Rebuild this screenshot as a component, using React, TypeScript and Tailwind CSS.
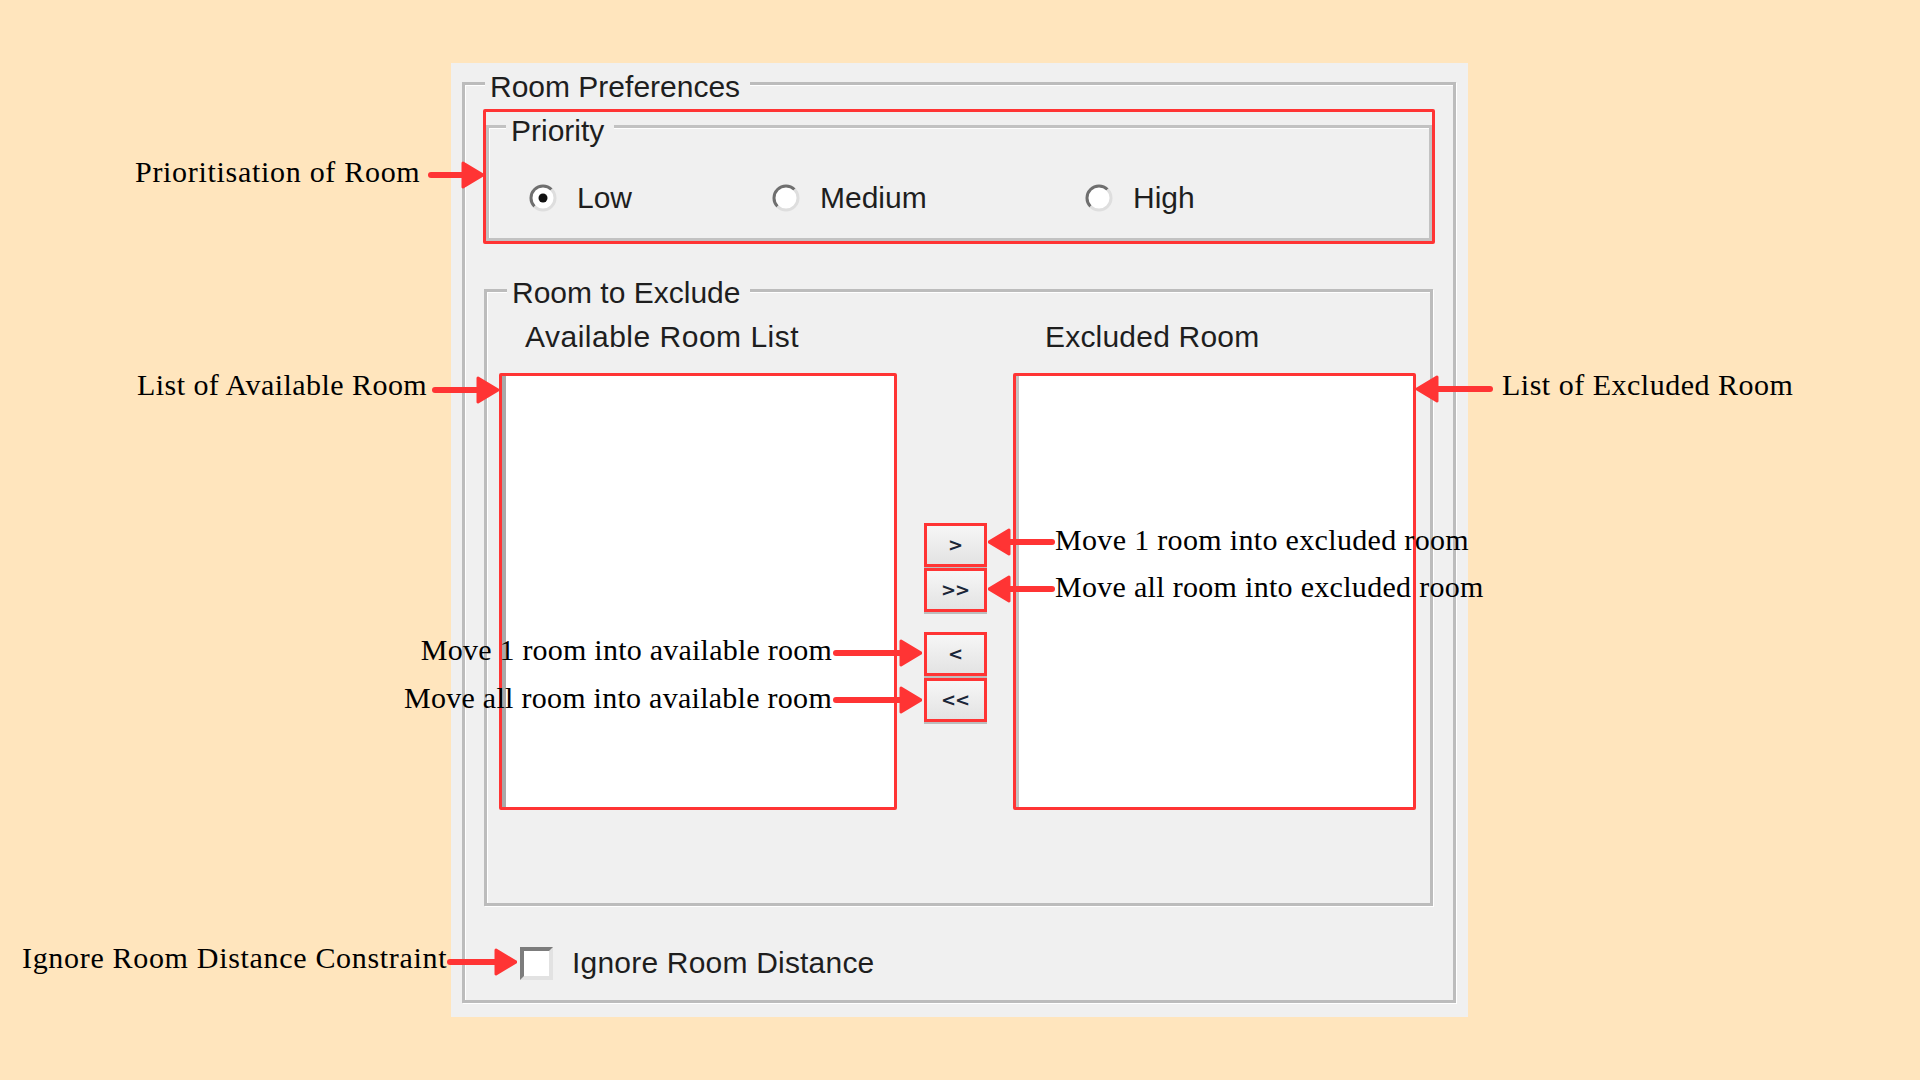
import type { ReactNode } from 'react'

const UI_FONT = "font-['Liberation_Sans',Arial,sans-serif] text-[30px] leading-[34px] text-[#1e1e1e]"
const NOTE_FONT = "font-['Liberation_Serif','Times_New_Roman',serif] text-[30px] leading-[34px] text-black"
const RED = '#ff3434'

function Legend({ pos, children }: { pos: string; children: ReactNode }) {
  return (
    <span className={`absolute whitespace-nowrap bg-[#f0f0f0] pl-[5px] pr-[10px] ${pos}`}>{children}</span>
  )
}

function RadioDot({ checked }: { checked?: boolean }) {
  return (
    <svg viewBox="0 0 28 28" className="h-[28px] w-[28px] shrink-0">
      <circle cx="14" cy="14" r="12" fill="#fff" />
      <path d="M5.5 22.5 A12 12 0 0 1 22.5 5.5" stroke="#6f6f6f" strokeWidth="3" fill="none" />
      <path d="M22.5 5.5 A12 12 0 0 1 5.5 22.5" stroke="#dedede" strokeWidth="3" fill="none" />
      {checked && <circle cx="14" cy="14" r="4.5" fill="#111" />}
    </svg>
  )
}

function Radio({ label, checked, width }: { label: string; checked?: boolean; width: string }) {
  return (
    <div className={`flex items-center gap-[20px] ${width}`}>
      <RadioDot checked={checked} />
      <span>{label}</span>
    </div>
  )
}

function MoveButton({ label }: { label: string }) {
  return (
    <div className="flex h-[44px] w-[63px] items-center justify-center border-[3px] border-[#ff3434] bg-gradient-to-b from-[#f6f6f6] to-[#e3e3e3] font-['DejaVu_Sans',sans-serif] text-[18px] font-bold leading-none tracking-[-1px] text-[#1b2638] shadow-[0_2px_0_#bdbdbd]">
      {label}
    </div>
  )
}

function Arrow({ pos, width, dir }: { pos: string; width: number; dir: 'left' | 'right' }) {
  const w = width
  const line = dir === 'right' ? `M3 14 H${w - 16}` : `M${w - 3} 14 H16`
  const head = dir === 'right' ? `M${w - 21} 2 L${w - 1} 14 L${w - 21} 26 Z` : 'M21 2 L1 14 L21 26 Z'
  return (
    <svg className={`absolute h-[28px] ${pos}`} width={w} height={28} viewBox={`0 0 ${w} 28`}>
      <path d={line} stroke={RED} strokeWidth="6" strokeLinecap="round" />
      <path d={head} fill={RED} stroke={RED} strokeWidth="3" strokeLinejoin="round" />
    </svg>
  )
}

function Note({ pos, children }: { pos: string; children: ReactNode }) {
  return <div className={`absolute whitespace-nowrap ${NOTE_FONT} ${pos}`}>{children}</div>
}

export default function App() {
  return (
    <div className="relative h-[1080px] w-[1920px] overflow-hidden bg-[#ffe5bd] pl-[451px] pt-[63px]">
      {/* the form */}
      <div className={`h-[954px] w-[1017px] bg-[#f0f0f0] pl-[11px] pr-[12px] pt-[19px] ${UI_FONT}`}>
        <div className="relative h-[921px] border-[3px] border-[#bcbcbc] shadow-[1px_1px_0_#fff,inset_1px_1px_0_#fff]">
          <Legend pos="left-[20px] top-[-15px]">Room Preferences</Legend>

          {/* priority */}
          <div className="ml-[18px] mr-[18px] mt-[24px] h-[135px] rounded-[2px] border-[3px] border-[#ff3434]">
            <div className="relative mt-[13px] h-[116px] border-[3px] border-[#c2c2c2] shadow-[inset_1px_1px_0_#fff]">
              <Legend pos="left-[17px] top-[-14px]">Priority</Legend>
              <div className="mt-[53px] flex pl-[40px]">
                <Radio label="Low" checked width="w-[243px]" />
                <Radio label="Medium" width="w-[313px]" />
                <Radio label="High" width="w-[200px]" />
              </div>
            </div>
          </div>

          {/* room to exclude */}
          <div className="relative ml-[19px] mr-[20px] mt-[45px] h-[617px] border-[3px] border-[#bcbcbc] shadow-[1px_1px_0_#fff,inset_1px_1px_0_#fff]">
            <Legend pos="left-[20px] top-[-16px]">Room to Exclude</Legend>
            <div className="flex pt-[28px]">
              <div className="w-[558px] pl-[38px] tracking-[0.5px]">Available Room List</div>
              <div className="tracking-[0.2px]">Excluded Room</div>
            </div>
            <div className="mt-[19px] flex pl-[12px] pr-[14px]">
              <div className="h-[437px] w-[398px] rounded-[2px] border-[3px] border-[#ff3434] bg-white shadow-[inset_4px_0_0_#a9a9a9]" />
              <div className="flex w-[116px] flex-col items-center pt-[150px]">
                <MoveButton label=">" />
                <div className="mt-[1px]">
                  <MoveButton label=">>" />
                </div>
                <div className="mt-[20px]">
                  <MoveButton label="<" />
                </div>
                <div className="mt-[2px]">
                  <MoveButton label="<<" />
                </div>
              </div>
              <div className="h-[437px] w-[403px] rounded-[2px] border-[3px] border-[#ff3434] bg-white shadow-[inset_3px_0_0_#c4c4c4]" />
            </div>
          </div>

          {/* ignore distance */}
          <div className="mt-[40px] flex items-center gap-[19px] pl-[55px]">
            <div className="h-[33px] w-[33px] border-[4px] border-b-[#e2e2e2] border-l-[#7c7c7c] border-r-[#e2e2e2] border-t-[#7c7c7c] bg-white" />
            <span className="tracking-[0.2px]">Ignore Room Distance</span>
          </div>
        </div>
      </div>

      {/* annotations */}
      <div className="pointer-events-none absolute inset-0">
        <Note pos="left-[135px] top-[155px] tracking-[0.7px]">Prioritisation of Room</Note>
        <Arrow pos="left-[428px] top-[161px]" width={56} dir="right" />

        <Note pos="left-[137px] top-[368px] tracking-[0.45px]">List of Available Room</Note>
        <Arrow pos="left-[432px] top-[376px]" width={67} dir="right" />

        <Note pos="left-[1502px] top-[368px] tracking-[0.5px]">List of Excluded Room</Note>
        <Arrow pos="left-[1416px] top-[375px]" width={77} dir="left" />

        <Note pos="left-[1055px] top-[523px] tracking-[0.33px]">Move 1 room into excluded room</Note>
        <Arrow pos="left-[988px] top-[528px]" width={67} dir="left" />

        <Note pos="left-[1055px] top-[570px] tracking-[0.3px]">Move all room into excluded room</Note>
        <Arrow pos="left-[988px] top-[575px]" width={67} dir="left" />

        <Note pos="right-[1088px] top-[633px] tracking-[0.23px]">Move 1 room into available room</Note>
        <Arrow pos="left-[833px] top-[639px]" width={89} dir="right" />

        <Note pos="right-[1088px] top-[681px] tracking-[0.27px]">Move all room into available room</Note>
        <Arrow pos="left-[833px] top-[686px]" width={89} dir="right" />

        <Note pos="left-[22px] top-[941px] tracking-[0.68px]">Ignore Room Distance Constraint</Note>
        <Arrow pos="left-[447px] top-[948px]" width={70} dir="right" />
      </div>
    </div>
  )
}
